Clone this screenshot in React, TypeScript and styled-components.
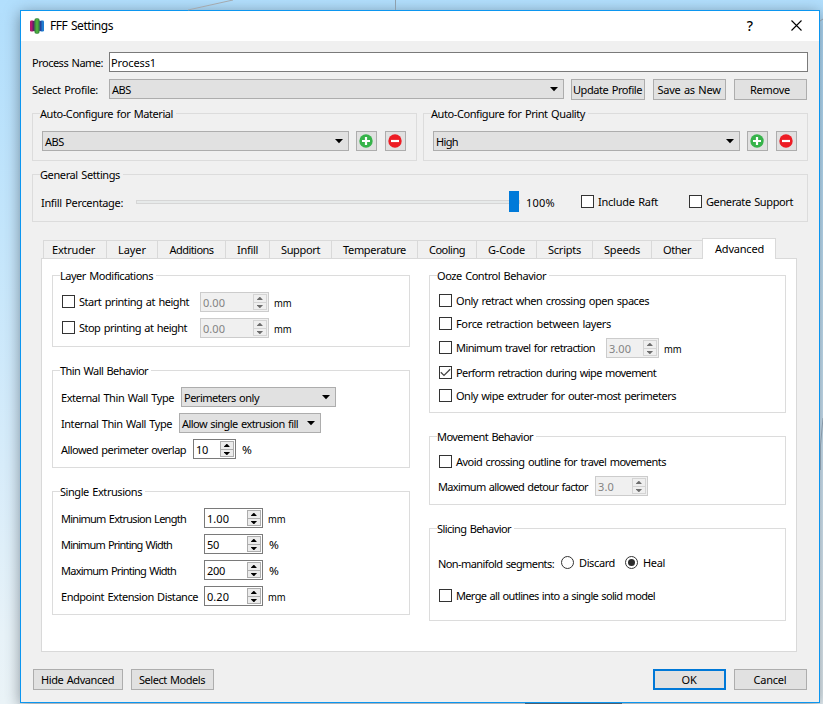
import React, { useLayoutEffect, useRef, useState } from "react";
import styled, { createGlobalStyle, css } from "styled-components";

const Global = createGlobalStyle`
  * { box-sizing: border-box; }
  html, body { margin: 0; padding: 0; overflow: hidden; }
  body { font-family: "Noto Sans", "Open Sans", sans-serif; font-size: 11px; color: #000; }
`;

/* ---------- desktop and window frame ---------- */

const Desktop = styled.div`
  position: relative;
  width: 823px;
  height: 704px;
  padding: 10px 0 0 20px;
  overflow: hidden;
  background: linear-gradient(180deg, #b2dffd 0%, #c4e6fc 33%, #d8edfb 66%, #e8f3f9 90%, #ebf4f8 100%);
`;

const Sketch = styled.svg`
  position: absolute;
  left: 0;
  top: 0;
`;

const Dialog = styled.div`
  position: relative;
  width: 800px;
  height: 693px;
  border: 1px solid #0c96f0;
  background: #f0f0f0;
  box-shadow: 0 3px 14px rgba(40, 50, 60, 0.5);
  display: flex;
  flex-direction: column;
`;

const TitleBar = styled.header`
  height: 30px;
  flex: none;
  background: #fff;
  display: flex;
  align-items: center;
  padding-left: 9px;
  font-size: 12px;
`;

const TitleText = styled.h1`
  font: inherit;
  margin: 0 auto 0 6px;
`;

const TitleButton = styled.button<{ $w: number }>`
  width: ${(p) => p.$w}px;
  height: 30px;
  border: 0;
  padding: 0 0 2px;
  background: none;
  font: 500 14px "Noto Sans", sans-serif;
  display: flex;
  align-items: center;
  justify-content: center;
`;

const Body = styled.main`
  flex: 1;
  display: flex;
  flex-direction: column;
  padding: 11px 11px 0 11px;
`;

/* ---------- layout parts ---------- */

const Row = styled.div<{ $h?: number; $mt?: number; $pl?: number }>`
  display: flex;
  align-items: center;
  flex: none;
  height: ${(p) => p.$h ?? 20}px;
  margin-top: ${(p) => p.$mt ?? 0}px;
  padding-left: ${(p) => p.$pl ?? 0}px;
`;

const Columns = styled.div<{ $gap: number; $mt: number }>`
  display: flex;
  gap: ${(p) => p.$gap}px;
  margin-top: ${(p) => p.$mt}px;
`;

const Column = styled.div<{ $w: number }>`
  width: ${(p) => p.$w}px;
  display: flex;
  flex-direction: column;
`;

const Spacer = styled.div`
  flex: 1;
`;

const GroupBox = styled.section<{ $h: number; $w?: number; $mt?: number }>`
  display: flex;
  flex-direction: column;
  flex: none;
  height: ${(p) => p.$h}px;
  width: ${(p) => (p.$w ? `${p.$w}px` : "auto")};
  margin-top: ${(p) => p.$mt ?? 0}px;
  border: 1px solid #dcdcdc;
`;

const Legend = styled.div<{ $bg?: string }>`
  align-self: flex-start;
  height: 16px;
  margin: -8px 0 0 7px;
  padding-right: 3px;
  line-height: 16px;
  background: ${(p) => p.$bg ?? "#fff"};
`;

/* ---------- text ---------- */

const TextSlot = styled.span<{ $w: number; $ml: number; $dy: number }>`
  display: block;
  flex: none;
  width: ${(p) => p.$w}px;
  margin-left: ${(p) => p.$ml}px;
  transform: translateY(${(p) => p.$dy}px);
  white-space: nowrap;
  line-height: 16px;
`;

const TextRun = styled.span`
  display: inline-block;
  word-spacing: 1px;
`;

/** A single line of text tracked so that it fills exactly `w` pixels. */
function Text({ w, ml = 0, dy = 0, children }: { w: number; ml?: number; dy?: number; children: string }) {
  const ref = useRef<HTMLSpanElement>(null);
  const [spacing, setSpacing] = useState(0);
  useLayoutEffect(() => {
    const natural = ref.current!.getBoundingClientRect().width;
    setSpacing((w - natural) / children.length);
  }, [w, children]);
  return (
    <TextSlot $w={w} $ml={ml} $dy={dy}>
      <TextRun ref={ref} style={{ letterSpacing: `${spacing}px` }}>
        {children}
      </TextRun>
    </TextSlot>
  );
}

const Unit = styled.span<{ $percent?: boolean }>`
  flex: none;
  margin-left: ${(p) => (p.$percent ? 6 : 5)}px;
  line-height: 16px;
  transform: translateY(1px) scaleX(${(p) => (p.$percent ? 1.08 : 0.86)});
  transform-origin: 0 50%;
`;

/* ---------- controls ---------- */

const Input = styled.div<{ $w: number; $ml: number }>`
  width: ${(p) => p.$w}px;
  height: 20px;
  margin-left: ${(p) => p.$ml}px;
  border: 1px solid #7a7a7a;
  background: #fff;
  display: flex;
  align-items: center;
`;

const PushButton = styled.button<{ $w: number; $ml?: number; $primary?: boolean; $h?: number }>`
  flex: none;
  width: ${(p) => p.$w}px;
  height: ${(p) => p.$h ?? 21}px;
  margin: 0 0 0 ${(p) => p.$ml ?? 0}px;
  padding: 0 1px 0 0;
  border: 1px solid #adadad;
  background: #e1e1e1;
  color: #000;
  font: inherit;
  text-align: left;
  display: flex;
  align-items: center;
  justify-content: center;
  ${(p) =>
    p.$primary &&
    css`
      border: 2px solid #0078d7;
    `}
`;

const ComboFrame = styled.div<{ $w: number; $ml: number }>`
  flex: none;
  align-self: flex-start;
  width: ${(p) => p.$w}px;
  height: 20px;
  margin-left: ${(p) => p.$ml}px;
  border: 1px solid #adadad;
  background: #e1e1e1;
  display: flex;
  align-items: center;
  justify-content: space-between;
  padding: 0 5px 0 2px;
`;

function Combo({ w, ml = 0, tw, children }: { w: number; ml?: number; tw: number; children: string }) {
  return (
    <ComboFrame $w={w} $ml={ml}>
      <Text w={tw} dy={1}>{children}</Text>
      <svg width="8" height="6" viewBox="0 0 8 6">
        <path d="M0 1H8L4 5.2Z" fill="#000" />
      </svg>
    </ComboFrame>
  );
}

const SpinFrame = styled.div<{ $w: number; $ml: number; $off?: boolean }>`
  flex: none;
  width: ${(p) => p.$w}px;
  height: 20px;
  margin-left: ${(p) => p.$ml}px;
  border: 1px solid ${(p) => (p.$off ? "#cccccc" : "#7a7a7a")};
  background: ${(p) => (p.$off ? "#f0f0f0" : "#fff")};
  color: ${(p) => (p.$off ? "#838383" : "#000")};
  display: flex;
  align-items: center;
  justify-content: space-between;
  padding: 0 1px 0 2px;
`;

const SpinButtons = styled.div<{ $off?: boolean }>`
  width: 14px;
  height: 16px;
  border: 1px solid ${(p) => (p.$off ? "#d4d4d4" : "#adadad")};
  background: ${(p) => (p.$off ? "#efefef" : "#ececec")};
  display: grid;
  grid-template-rows: 8px 6px;
  & > :first-child {
    border-bottom: 1px solid ${(p) => (p.$off ? "#d4d4d4" : "#adadad")};
  }
`;

const SpinStep = styled.div`
  display: flex;
  align-items: center;
  padding-left: 3px;
`;

function Spin({ w, ml = 0, tw, off, children }: { w: number; ml?: number; tw: number; off?: boolean; children: string }) {
  const fill = off ? "#6d6d6d" : "#000";
  return (
    <SpinFrame $w={w} $ml={ml} $off={off}>
      <Text w={tw} dy={1}>{children}</Text>
      <SpinButtons $off={off}>
        <SpinStep>
          <svg width="6" height="3" viewBox="0 0 6 3"><path d="M0 3V2.4L2.5 0H3.2L5.6 2.4V3Z" fill={fill} /></svg>
        </SpinStep>
        <SpinStep>
          <svg width="6" height="3" viewBox="0 0 6 3"><path d="M0 0V.6L2.5 3H3.2L5.6 .6V0Z" fill={fill} /></svg>
        </SpinStep>
      </SpinButtons>
    </SpinFrame>
  );
}

const Box = styled.span<{ $ml: number; $mb?: number; $round?: boolean }>`
  flex: none;
  width: 13px;
  height: 13px;
  margin-left: ${(p) => p.$ml}px;
  margin-bottom: ${(p) => p.$mb ?? 0}px;
  border: 1px solid #333;
  border-radius: ${(p) => (p.$round ? "50%" : "0")};
  background: #fff;
  display: flex;
  align-items: center;
  justify-content: center;
`;

const Dot = styled.span`
  width: 7px;
  height: 7px;
  border-radius: 50%;
  background: #2b2b2b;
`;

function Check({ ml = 0, mb = 0, on }: { ml?: number; mb?: number; on?: boolean }) {
  return (
    <Box $ml={ml} $mb={mb}>
      {on && (
        <svg width="11" height="11" viewBox="0 0 11 11">
          <path d="M.8 5.2L4 8.4L10.2 2.2" fill="none" stroke="#444" strokeWidth="1.3" />
        </svg>
      )}
    </Box>
  );
}

function Radio({ ml = 0, on }: { ml?: number; on?: boolean }) {
  return (
    <Box $ml={ml} $round>
      {on && <Dot />}
    </Box>
  );
}

function AddRemove() {
  return (
    <>
      <PushButton $w={21} $h={20} $ml={7}>
        <svg width="14" height="14" viewBox="0 0 14 14">
          <circle cx="7" cy="7" r="6.7" fill="#36b34a" />
          <path d="M7 3V11M3 7H11" stroke="#fff" strokeWidth="2.2" />
        </svg>
      </PushButton>
      <PushButton $w={21} $h={20} $ml={8}>
        <svg width="14" height="14" viewBox="0 0 14 14">
          <circle cx="7" cy="7" r="6.7" fill="#ed1c24" />
          <path d="M3 7H11" stroke="#fff" strokeWidth="2.2" />
        </svg>
      </PushButton>
    </>
  );
}

const Groove = styled.div`
  flex: none;
  width: 384px;
  height: 4px;
  margin-left: 13px;
  border: 1px solid #d6d6d6;
  background: #e7eaea;
  display: flex;
  align-items: center;
  justify-content: flex-end;
`;

const Handle = styled.div`
  flex: none;
  width: 10px;
  height: 21px;
  background: #007ad9;
`;

/* ---------- tabs ---------- */

const TabStrip = styled.nav`
  display: flex;
  align-items: flex-end;
  height: 20px;
  margin: 16px 0 0 11px;
`;

const Tab = styled.div<{ $w: number; $active?: boolean }>`
  flex: none;
  width: ${(p) => p.$w}px;
  height: 18px;
  border: 1px solid #d9d9d9;
  border-width: 1px 0 0 1px;
  display: flex;
  align-items: center;
  ${(p) =>
    p.$active &&
    css`
      height: 21px;
      margin-bottom: -1px;
      border-right-width: 1px;
      background: #fff;
      z-index: 1;
    `}
`;

const TabPane = styled.div`
  flex: none;
  width: 756px;
  height: 394px;
  margin-left: 9px;
  padding: 0 10px;
  border: 1px solid #d9d9d9;
  background: #fff;
`;

const TABS: { name: string; w: number; pad: number; tw: number }[] = [
  { name: "Extruder", w: 63, pad: 8, tw: 43 },
  { name: "Layer", w: 51, pad: 11, tw: 28 },
  { name: "Additions", w: 68, pad: 11.5, tw: 44 },
  { name: "Infill", w: 44, pad: 11, tw: 21 },
  { name: "Support", w: 62, pad: 11, tw: 39 },
  { name: "Temperature", w: 86, pad: 11, tw: 63 },
  { name: "Cooling", w: 59, pad: 11, tw: 36 },
  { name: "G-Code", w: 60, pad: 11, tw: 37 },
  { name: "Scripts", w: 56, pad: 11, tw: 33 },
  { name: "Speeds", w: 59, pad: 11, tw: 36 },
  { name: "Other", w: 51, pad: 11, tw: 28 },
  { name: "Advanced", w: 74, pad: 12, tw: 49 },
];

const EXTRUSIONS: { name: string; tw: number; value: string; vw: number; unit: string }[] = [
  { name: "Minimum Extrusion Length", tw: 125, value: "1.00", vw: 22, unit: "mm" },
  { name: "Minimum Printing Width", tw: 111, value: "50", vw: 12, unit: "%" },
  { name: "Maximum Printing Width", tw: 115, value: "200", vw: 18, unit: "%" },
  { name: "Endpoint Extension Distance", tw: 137, value: "0.20", vw: 22, unit: "mm" },
];

function AppLogo() {
  return (
    <svg width="14" height="16" viewBox="0 0 14 16">
      <rect x="0" y="2.5" width="4" height="11" rx="1.2" fill="#b3186e" />
      <rect x="2.5" y="3" width="2.5" height="10" fill="#5a2468" />
      <rect x="10" y="2.5" width="4" height="11" rx="1.2" fill="#1f7cd0" />
      <rect x="9" y="3" width="2.5" height="10" fill="#25409a" />
      <rect x="4.4" y="0.3" width="5.2" height="15.4" rx="2" fill="#3c8c40" />
      <rect x="5.8" y="1" width="2.4" height="14" rx="1" fill="#4caf3e" />
    </svg>
  );
}

export default function App() {
  return (
    <Desktop>
      <Global />
      <Dialog>
        <TitleBar>
          <AppLogo />
          <TitleText><Text w={63}>FFF Settings</Text></TitleText>
          <TitleButton $w={46}>?</TitleButton>
          <TitleButton $w={46}>
            <svg width="11" height="11" viewBox="0 0 11 11">
              <path d="M.5 .5L10.5 10.5M10.5 .5L.5 10.5" stroke="#000" strokeWidth="1.1" />
            </svg>
          </TitleButton>
        </TitleBar>
        <Body>
          <Row $h={20}>
            <Text w={71} dy={1}>Process Name:</Text>
            <Input $w={699} $ml={6}><Text w={45} ml={1} dy={1}>Process1</Text></Input>
          </Row>
          <Row $h={21} $mt={7}>
            <Text w={66}>Select Profile:</Text>
            <Combo w={455} ml={11} tw={19}>ABS</Combo>
            <PushButton $w={74} $ml={7}><Text w={69}>Update Profile</Text></PushButton>
            <PushButton $w={73} $ml={8}><Text w={63}>Save as New</Text></PushButton>
            <PushButton $w={73} $ml={8}><Text w={40}>Remove</Text></PushButton>
          </Row>
          <Columns $gap={6} $mt={13}>
            <GroupBox $h={48} $w={385}>
              <Legend $bg="#f0f0f0"><Text w={133}>Auto-Configure for Material</Text></Legend>
              <Row $mt={9} $pl={9}>
                <Combo w={307} tw={19}>ABS</Combo>
                <AddRemove />
              </Row>
            </GroupBox>
            <GroupBox $h={48} $w={385}>
              <Legend $bg="#f0f0f0"><Text w={154}>Auto-Configure for Print Quality</Text></Legend>
              <Row $mt={9} $pl={9}>
                <Combo w={307} tw={22}>High</Combo>
                <AddRemove />
              </Row>
            </GroupBox>
          </Columns>
          <GroupBox $h={48} $w={776} $mt={13}>
            <Legend $bg="#f0f0f0"><Text w={80}>General Settings</Text></Legend>
            <Row $mt={8} $pl={8} $h={21}>
              <Text w={82} dy={1}>Infill Percentage:</Text>
              <Groove><Handle /></Groove>
              <Text w={29} ml={6} dy={1}>100%</Text>
              <Check ml={26} />
              <Text w={60} ml={4}>Include Raft</Text>
              <Check ml={31} />
              <Text w={87} ml={4}>Generate Support</Text>
            </Row>
          </GroupBox>
          <TabStrip>
            {TABS.map((t) => (
              <Tab key={t.name} $w={t.w} $active={t.name === "Advanced"}>
                <Text w={t.tw} ml={t.pad}>{t.name}</Text>
              </Tab>
            ))}
          </TabStrip>
          <TabPane>
            <Columns $gap={19} $mt={16}>
              <Column $w={358}>
                <GroupBox $h={72}>
                  <Legend><Text w={93}>Layer Modifications</Text></Legend>
                  <Row $mt={8} $pl={9}>
                    <Check mb={1} />
                    <Text w={110} ml={4}>Start printing at height</Text>
                    <Spin w={69} ml={11} tw={22} off>0.00</Spin>
                    <Unit>mm</Unit>
                  </Row>
                  <Row $mt={6} $pl={9}>
                    <Check mb={1} />
                    <Text w={108} ml={4}>Stop printing at height</Text>
                    <Spin w={69} ml={13} tw={22} off>0.00</Spin>
                    <Unit>mm</Unit>
                  </Row>
                </GroupBox>
                <GroupBox $h={98} $mt={23}>
                  <Legend><Text w={88}>Thin Wall Behavior</Text></Legend>
                  <Row $mt={8} $pl={8}>
                    <Text w={113} dy={1}>External Thin Wall Type</Text>
                    <Combo w={155} ml={7} tw={75}>Perimeters only</Combo>
                  </Row>
                  <Row $mt={6} $pl={8}>
                    <Text w={111} dy={1}>Internal Thin Wall Type</Text>
                    <Combo w={142} ml={7} tw={116}>Allow single extrusion fill</Combo>
                  </Row>
                  <Row $mt={6} $pl={8}>
                    <Text w={125} dy={1}>Allowed perimeter overlap</Text>
                    <Spin w={43} ml={7} tw={12}>10</Spin>
                    <Unit $percent>%</Unit>
                  </Row>
                </GroupBox>
                <GroupBox $h={124} $mt={23}>
                  <Legend><Text w={82}>Single Extrusions</Text></Legend>
                  {EXTRUSIONS.map((e, i) => (
                    <Row key={e.name} $mt={i ? 6 : 8} $pl={8}>
                      <Text w={e.tw} dy={1}>{e.name}</Text>
                      <Spin w={59} ml={143 - e.tw} tw={e.vw}>{e.value}</Spin>
                      <Unit $percent={e.unit === "%"}>{e.unit}</Unit>
                    </Row>
                  ))}
                </GroupBox>
              </Column>
              <Column $w={357}>
                <GroupBox $h={138}>
                  <Legend><Text w={109}>Ooze Control Behavior</Text></Legend>
                  <Row $h={13} $mt={10} $pl={9}>
                    <Check />
                    <Text w={193} ml={4}>Only retract when crossing open spaces</Text>
                  </Row>
                  <Row $h={13} $mt={10} $pl={9}>
                    <Check />
                    <Text w={155} ml={4}>Force retraction between layers</Text>
                  </Row>
                  <Row $mt={8} $pl={9}>
                    <Check mb={1} />
                    <Text w={139} ml={4}>Minimum travel for retraction</Text>
                    <Spin w={53} ml={11} tw={22} off>3.00</Spin>
                    <Unit>mm</Unit>
                  </Row>
                  <Row $h={13} $mt={8} $pl={9}>
                    <Check on />
                    <Text w={200} ml={4}>Perform retraction during wipe movement</Text>
                  </Row>
                  <Row $h={13} $mt={10} $pl={9}>
                    <Check />
                    <Text w={220} ml={4}>Only wipe extruder for outer-most perimeters</Text>
                  </Row>
                </GroupBox>
                <GroupBox $h={69} $mt={23}>
                  <Legend><Text w={96}>Movement Behavior</Text></Legend>
                  <Row $h={13} $mt={10} $pl={9}>
                    <Check />
                    <Text w={210} ml={4}>Avoid crossing outline for travel movements</Text>
                  </Row>
                  <Row $mt={8} $pl={8}>
                    <Text w={150} dy={1}>Maximum allowed detour factor</Text>
                    <Spin w={53} ml={7} tw={16} off>3.0</Spin>
                  </Row>
                </GroupBox>
                <GroupBox $h={93} $mt={23}>
                  <Legend><Text w={74}>Slicing Behavior</Text></Legend>
                  <Row $h={13} $mt={19} $pl={8}>
                    <Text w={116} dy={1}>Non-manifold segments:</Text>
                    <Radio ml={7} />
                    <Text w={36} ml={5}>Discard</Text>
                    <Radio ml={10} on />
                    <Text w={22} ml={5}>Heal</Text>
                  </Row>
                  <Row $h={13} $mt={20} $pl={9}>
                    <Check />
                    <Text w={199} ml={4}>Merge all outlines into a single solid model</Text>
                  </Row>
                </GroupBox>
              </Column>
            </Columns>
          </TabPane>
          <Row $h={21} $mt={17} $pl={1}>
            <PushButton $w={90}><Text w={73}>Hide Advanced</Text></PushButton>
            <PushButton $w={83} $ml={8}><Text w={66}>Select Models</Text></PushButton>
            <Spacer />
            <PushButton $w={73} $primary><Text w={15}>OK</Text></PushButton>
            <PushButton $w={73} $ml={8}><Text w={33}>Cancel</Text></PushButton>
            <Row $pl={1} />
          </Row>
        </Body>
      </Dialog>
      <Sketch width="823" height="704">
        <path d="M188 10L233 0" stroke="#a5a9ad" strokeWidth="1" />
        <path d="M395.5 0V10" stroke="#8ea0ad" strokeWidth="1" />
        <path d="M820 21L823 19" stroke="#8b98a4" strokeWidth="1" />
        <path d="M820.5 470V445L823 418" fill="none" stroke="#8697a6" strokeWidth="1" />
        <path d="M525 703.5H622" stroke="#4a5f70" strokeWidth="1" />
      </Sketch>
    </Desktop>
  );
}
